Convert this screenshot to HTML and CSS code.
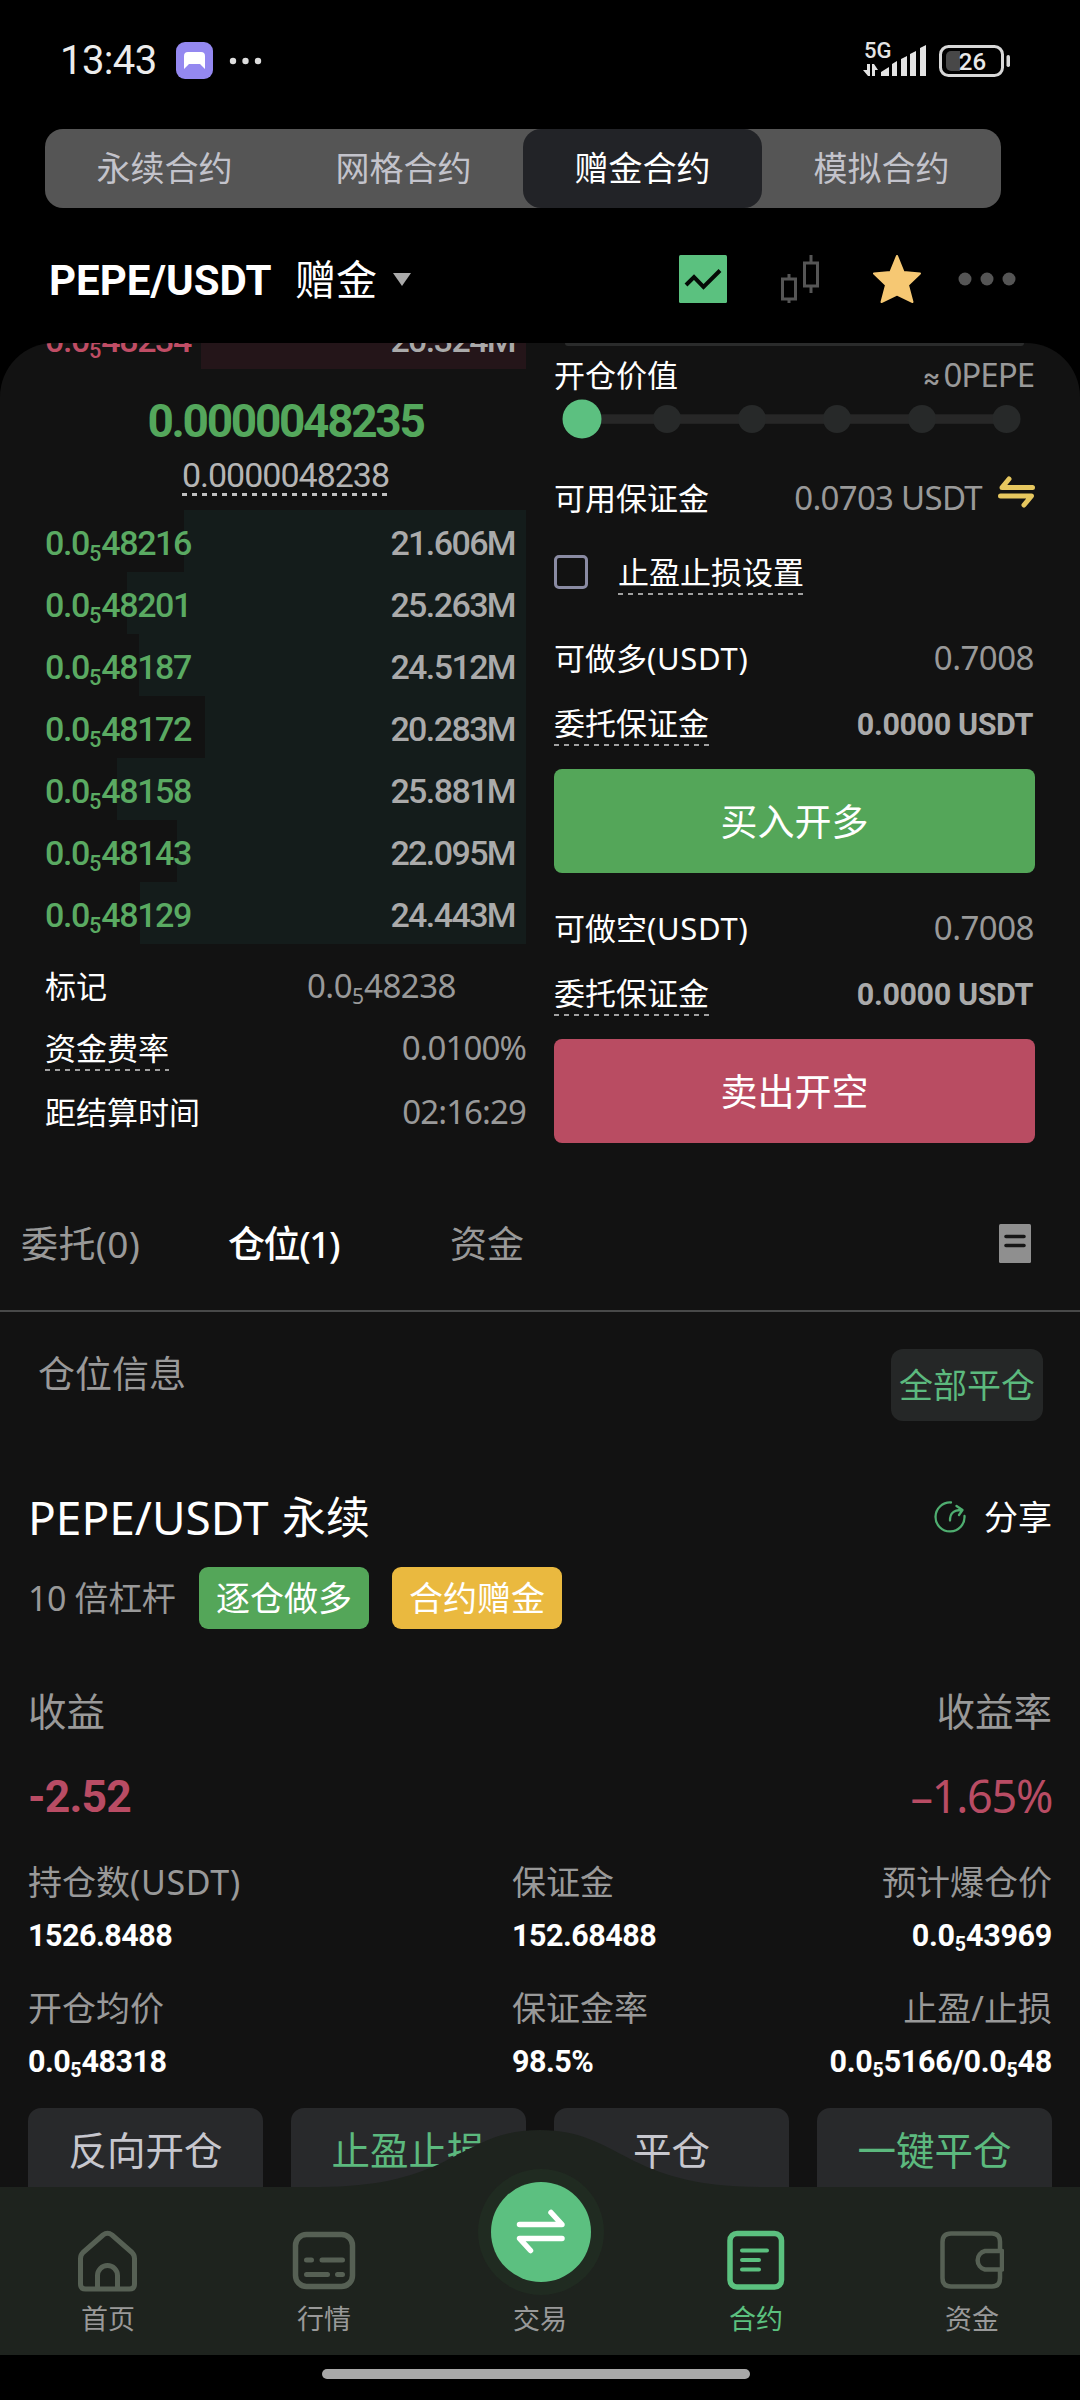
FILE: index.html
```html
<!DOCTYPE html>
<html lang="zh-CN">
<head>
<meta charset="utf-8">
<title>PEPE/USDT 赠金合约</title>
<link rel="stylesheet" href="styles.css">
</head>
<body>
<div class="screen">
  <header class="status">
    <span class="clock">13:43</span>
    <svg class="app-badge" viewBox="0 0 37 37"><rect width="37" height="37" rx="9" fill="#9488f0"/><path d="M8 14a4 4 0 0 1 4-4h13a4 4 0 0 1 4 4v13l-5-5H13l-5 5z" fill="#fff"/></svg>
    <svg class="more-dots" viewBox="0 0 33 8" fill="#ddd"><circle cx="4" cy="4" r="3.200"/><circle cx="16.500" cy="4" r="3.200"/><circle cx="29" cy="4" r="3.200"/></svg>
    <span class="grow"></span>
    <svg class="signal" viewBox="0 0 66 48" fill="#e4e4e4"><text x="3" y="21" class="net">5G</text><path d="M6 27h3v12H7l-5-6h4zM11 39V27h2l4 6h-3v6zM20 35l8-5v9h-8zM31 27l5-3v15h-5zM40 22l6-3v20h-6zM49 17l6-3v25h-6zM59 11l6-3v31h-6z"/></svg>
    <svg class="battery" viewBox="0 0 72 32"><rect x="1.500" y="1.500" width="62" height="29" rx="8" fill="none" stroke="#d8d8d8" stroke-width="3"/><path d="M12 6h9v20h-9a5 5 0 0 1-5-5v-10a5 5 0 0 1 5-5z" fill="#484848"/><rect x="67.500" y="10" width="3.500" height="12" rx="1.700" fill="#d8d8d8"/><text x="33.500" y="25" text-anchor="middle" class="level">26</text></svg>
  </header>

  <nav class="segments">
    <span class="segment">永续合约</span><span class="segment">网格合约</span><span class="segment segment-on">赠金合约</span><span class="segment">模拟合约</span>
  </nav>

  <div class="pair-bar">
    <strong class="pair">PEPE/USDT</strong><span class="pair-kind">赠金</span><i class="caret"></i>
    <span class="grow"></span>
    <svg class="ico-chart" viewBox="0 0 48 48"><rect width="48" height="48" rx="1.500" fill="#5bc17f"/><path d="M7 30l8-8 9.500 10L41 15.500" fill="none" stroke="#050a06" stroke-width="4"/></svg>
    <svg class="ico-candle" viewBox="0 0 38 48" fill="none" stroke="#555" stroke-width="3"><path d="M1.500 24h13v20h-13zM8 19v5M8 44v4M23.500 8h13v23h-13zM30 0v8M30 31v7"/></svg>
    <svg class="ico-star" viewBox="0 0 48 48" fill="#f6c873" stroke="#f6c873" stroke-width="2" stroke-linejoin="round"><path d="M24 1l6.500 16 16.500 1.500-12 11.500L39.500 47 24 39.500 8.500 47 13 30 1 18.500 17.500 17z"/></svg>
    <svg class="ico-more" viewBox="0 0 58 14" fill="#555"><circle cx="7" cy="7" r="6.500"/><circle cx="29" cy="7" r="6.500"/><circle cx="51" cy="7" r="6.500"/></svg>
  </div>

  <main class="panel">
    <div class="trade">
      <section class="book">
        <div class="ask"><div class="ask-fill"></div><span class="px">0.0<sub>5</sub>48234</span><span class="qty">20.324M</span></div>
        <div class="last">0.0000048235</div>
        <div class="index-line"><span class="index">0.0000048238</span></div>
        <div class="bids">
          <div class="bid"><div class="fill" style="width:342px"></div><span class="px">0.0<sub>5</sub>48216</span><span class="qty">21.606M</span></div>
          <div class="bid"><div class="fill" style="width:399px"></div><span class="px">0.0<sub>5</sub>48201</span><span class="qty">25.263M</span></div>
          <div class="bid"><div class="fill" style="width:387px"></div><span class="px">0.0<sub>5</sub>48187</span><span class="qty">24.512M</span></div>
          <div class="bid"><div class="fill" style="width:321px"></div><span class="px">0.0<sub>5</sub>48172</span><span class="qty">20.283M</span></div>
          <div class="bid"><div class="fill" style="width:409px"></div><span class="px">0.0<sub>5</sub>48158</span><span class="qty">25.881M</span></div>
          <div class="bid"><div class="fill" style="width:349px"></div><span class="px">0.0<sub>5</sub>48143</span><span class="qty">22.095M</span></div>
          <div class="bid"><div class="fill" style="width:386px"></div><span class="px">0.0<sub>5</sub>48129</span><span class="qty">24.443M</span></div>
        </div>
        <div class="info info-mark"><span>标记</span><span class="dim">0.0<sub>5</sub>48238</span></div>
        <div class="info"><span class="hint">资金费率</span><span class="dim tight">0.0100%</span></div>
        <div class="info info-time"><span>距结算时间</span><span class="dim tight">02:16:29</span></div>
      </section>

      <section class="order">
        <div class="input-edge"></div>
        <div class="line value-line"><span>开仓价值</span><span class="dim worth"><span class="approx">≈</span>0PEPE</span></div>
        <svg class="slider" viewBox="0 0 481 40"><rect x="28" y="15.300" width="424" height="9.500" fill="#272727"/><g fill="#272929"><circle cx="113" cy="20" r="14"/><circle cx="198" cy="20" r="14"/><circle cx="283" cy="20" r="14"/><circle cx="368" cy="20" r="14"/><circle cx="452.500" cy="20" r="14"/></g><circle cx="28" cy="20" r="19.500" fill="#5cc080"/></svg>
        <div class="line avail"><span>可用保证金</span><span class="dim money">0.0703 USDT</span><svg class="swap" viewBox="0 0 37 32" fill="none" stroke="#e6c75f" stroke-width="5" stroke-linecap="round" stroke-linejoin="round"><path d="M34.500 11.500H4L11 3M2.500 20H33.500L26 29"/></svg></div>
        <div class="line tpsl"><i class="check"></i><span class="hint">止盈止损设置</span></div>
        <div class="line can"><span>可做多<span class="unit">(USDT)</span></span><span class="dim">0.7008</span></div>
        <div class="line cost"><span class="hint">委托保证金</span><strong>0.0000 USDT</strong></div>
        <button class="act act-buy">买入开多</button>
        <div class="line can can-short"><span>可做空<span class="unit">(USDT)</span></span><span class="dim">0.7008</span></div>
        <div class="line cost"><span class="hint">委托保证金</span><strong>0.0000 USDT</strong></div>
        <button class="act act-sell">卖出开空</button>
      </section>
    </div>

    <div class="tabs">
      <span class="tab tab-orders">委托(0)</span><span class="tab tab-on">仓位(1)</span><span class="tab">资金</span>
      <svg class="ico-doc" viewBox="0 0 32 39"><rect width="32" height="39" rx="1.500" fill="#8f8f8f"/><path d="M7 12.500h18M7 21.500h18" stroke="#161616" stroke-width="3.600" stroke-linecap="round"/></svg>
    </div>

    <div class="section-head"><span>仓位信息</span><button class="close-all">全部平仓</button></div>

    <section class="position">
      <div class="pos-title"><span class="pos-pair">PEPE/USDT</span><span class="pos-kind">永续</span><svg class="ico-share" viewBox="0 0 32 32" fill="none" stroke="#4fae70" stroke-width="2.300" stroke-linecap="round" stroke-linejoin="round"><path d="M17 1.500A14.500 14.500 0 1 0 30.500 15M16 19.500c0-7 3-10.500 11.500-10.500M22.500 5l6 4-3.500 5"/></svg><span class="share">分享</span></div>
      <div class="tags"><span class="lever">10 倍杠杆</span><span class="tag tag-long">逐仓做多</span><span class="tag tag-bonus">合约赠金</span></div>
      <div class="pnl-labels"><span>收益</span><span>收益率</span></div>
      <div class="pnl"><strong>-2.52</strong><span class="rate">–1.65%</span></div>
      <div class="stats">
        <div class="stat"><span class="label">持仓数<span class="unit">(USDT)</span></span><strong>1526.8488</strong></div>
        <div class="stat"><span class="label">保证金</span><strong>152.68488</strong></div>
        <div class="stat stat-end"><span class="label">预计爆仓价</span><strong>0.0<sub>5</sub>43969</strong></div>
        <div class="stat"><span class="label">开仓均价</span><strong>0.0<sub>5</sub>48318</strong></div>
        <div class="stat"><span class="label">保证金率</span><strong>98.5%</strong></div>
        <div class="stat stat-end"><span class="label">止盈/止损</span><strong>0.0<sub>5</sub>5166/0.0<sub>5</sub>48</strong></div>
      </div>
      <div class="pos-actions"><button>反向开仓</button><button class="go">止盈止损</button><button>平仓</button><button class="go">一键平仓</button></div>
    </section>
  </main>

  <footer class="dock">
    <svg class="dock-shape" viewBox="0 0 1080 225"><path d="M0 57H320C455 57 460 0 540 0S625 57 760 57H1080V225H0z" fill="#1e231e"/><circle cx="541" cy="102" r="63" fill="#202b21"/><circle cx="541" cy="102" r="50" fill="#5cc080"/><path d="M519.500 94.500H562L551 82.500M562 108.500H519.500L530.500 120.500" fill="none" stroke="#fff" stroke-width="5.500" stroke-linecap="round" stroke-linejoin="round"/></svg>
    <div class="dock-items">
      <div class="item"><svg viewBox="0 0 64 64" fill="none" stroke="#566054" stroke-width="5" stroke-linejoin="round"><path d="M4.500 28.500Q4.500 25 7 22.500L27 5Q31.500 1.500 36 5L56 22.500Q58.500 25 58.500 28.500V54Q58.500 59 53.500 59H9.500Q4.500 59 4.500 54zM21.500 59V45.500a10 10 0 0 1 20 0V59"/></svg><span>首页</span></div>
      <div class="item"><svg viewBox="0 0 64 64" fill="none" stroke="#566054" stroke-width="5.500" stroke-linecap="round"><rect x="3.500" y="4.500" width="57" height="52" rx="11"/><path d="M14.500 30H19.500M30 30H50.500M14.500 44.500H35.500M45.500 44.500H50.500" stroke-width="5"/></svg><span>行情</span></div>
      <div class="item"><i class="spacer"></i><span>交易</span></div>
      <div class="item item-on"><svg viewBox="0 0 64 64" fill="none" stroke="#5bc17f" stroke-width="5.500" stroke-linecap="round"><rect x="6" y="3.500" width="51.500" height="53.500" rx="7"/><path d="M18 20.500H43M18 30H35M18 39.500H35" stroke-width="4"/></svg><span>合约</span></div>
      <div class="item"><svg viewBox="0 0 64 64" fill="none" stroke="#566054" stroke-width="4.500" stroke-linejoin="round"><path d="M60 21V12Q60 3.500 52 3.500H11Q2.500 3.500 2.500 12V48Q2.500 56.500 11 56.500H52Q60 56.500 60 48V39"/><path d="M62 21H45a9.500 9.500 0 0 0 0 18.500H62z"/></svg><span>资金</span></div>
    </div>
    <div class="home-bar"></div>
  </footer>
</div>
</body>
</html>
```

FILE: styles.css
```css
* { box-sizing: border-box; }
body { margin: 0; background: #000; }
button { border: 0; padding: 0; font: inherit; }
svg { display: block; flex: none; }
.screen {
  position: relative;
  width: 1080px;
  height: 2400px;
  overflow: hidden;
  background: #000;
  color: #fff;
  font: 400 33px/40px "Noto Sans", "Noto Sans CJK SC", sans-serif;
  white-space: nowrap;
}
.grow { flex: 1; }

.status { display: flex; align-items: center; height: 129px; padding: 0 69px 8px 60px; }
.clock { width: 116px; font: 400 40px/40px Roboto, sans-serif; letter-spacing: -.6px; color: #ececec; }
.app-badge { width: 37px; height: 37px; margin-right: 16px; }
.more-dots { width: 33px; height: 8px; }
.signal { width: 66px; height: 48px; margin-right: 12px; }
.net { font: 500 22px Roboto, sans-serif; }
.battery { width: 72px; height: 32px; }
.level { font: 500 24px Roboto, sans-serif; fill: #e8e8e8; }

.segments { display: flex; width: 956px; height: 79px; margin-left: 45px; border-radius: 18px; background: #555; }
.segment { width: 239px; font-size: 34px; line-height: 79px; text-align: center; color: #c3c3cb; border-radius: 18px; }
.segment-on { background: #222327; color: #fff; }

.pair-bar { display: flex; align-items: center; height: 135px; padding: 7px 64px 0 49px; }
.pair { width: 246px; padding-top: 3px; font: 700 42px/48px Roboto, sans-serif; }
.pair-kind { width: 98px; font-size: 41px; line-height: 48px; }
.caret { border: 9px solid transparent; border-top: 13px solid #aaa; border-bottom: 0; }
.ico-chart { width: 48px; height: 48px; margin-right: 54px; }
.ico-candle { width: 38px; height: 48px; margin-right: 54px; }
.ico-star { width: 48px; height: 48px; margin-right: 37px; }
.ico-more { width: 58px; height: 14px; }

.panel { height: 2012px; overflow: hidden; background: #121212; border-radius: 54px 54px 0 0; }
.trade { display: flex; gap: 28px; padding-left: 45px; height: 843px; }
sub { font-size: .64em; line-height: 0; vertical-align: -.27em; letter-spacing: 0; }

.book { width: 481px; }
.ask, .bid { position: relative; display: flex; justify-content: space-between; padding-right: 11px; height: 62px; font: 500 34px/62px Roboto, sans-serif; letter-spacing: -1.4px; }
.ask { height: 26px; overflow: hidden; align-items: flex-end; color: #c04d65; }
.ask .px, .ask .qty { line-height: 62px; position: relative; top: 2px; }
.ask-fill { position: absolute; right: 0; top: 0; width: 325px; height: 26px; background: #241519; }
.fill { position: absolute; right: 0; top: 0; bottom: 0; background: #141c1b; }
.bid .px, .bid .qty { position: relative; top: 2px; }
.qty, .ask .qty { color: #aaa; letter-spacing: -1.6px; }
.bid { color: #5aaa62; }
.bids { height: 434px; }
.last { margin-top: 29px; height: 46px; font: 700 46px/46px Roboto, sans-serif; letter-spacing: -2.3px; text-align: center; color: #54a75c; }
.index-line { height: 66px; padding-top: 11px; text-align: center; }
.index { display: inline-block; height: 37px; font: 400 34px/33px Roboto, sans-serif; letter-spacing: -1px; color: #b4b4b4; background: repeating-linear-gradient(90deg, #c0c0c0 0 5px, transparent 5px 10px) 0 100% / 100% 3px no-repeat; }
.info { display: flex; justify-content: space-between; height: 62px; font-size: 31px; line-height: 62px; }
.info-mark { margin-top: 11px; padding-right: 70px; }
.info-time { height: 66px; line-height: 66px; }
.dim { color: #999; font-size: 33px; letter-spacing: -.5px; }
.info .tight { letter-spacing: -.9px; }
.hint { background: repeating-linear-gradient(90deg, #a0a0a0 0 5px, transparent 5px 10px) 0 100% / 100% 2px no-repeat; }
.info .hint { height: 54px; }

.order { width: 481px; }
.input-edge { height: 3px; margin: 0 11px; background: #2a2b2b; border-radius: 0 0 8px 8px; }
.line { display: flex; justify-content: space-between; font-size: 31px; line-height: 44px; height: 44px; }
.value-line { margin-top: 7px; padding-right: 1px; }
.worth { letter-spacing: -1px; }
.approx { font: 500 27px Inter, sans-serif; letter-spacing: 3px; }
.unit { letter-spacing: .7px; }
.slider { width: 481px; height: 40px; margin-top: 2px; }
.avail { margin-top: 37px; }
.money { margin-left: auto; margin-right: 16px; letter-spacing: -.7px; }
.swap { width: 37px; height: 32px; }
.tpsl { margin-top: 30px; justify-content: flex-start; align-items: center; gap: 30px; }
.check { width: 34px; height: 34px; border: 3px solid #8a8ba3; border-radius: 5px; }
.tpsl .hint { height: 45px; }
.can { margin-top: 42px; padding-right: 1px; }
.cost { margin-top: 21px; padding-right: 2px; }
.cost .hint { height: 45px; }
.cost strong { font: 700 30.500px/48px Roboto, sans-serif; letter-spacing: -.4px; color: #aaa; }
.act { display: block; width: 481px; height: 104px; margin-top: 24px; border-radius: 8px; color: #fff; font-size: 37px; line-height: 103px; }
.act-buy { background: #54a659; }
.act-sell { background: #b94c62; }
.can-short { margin-top: 33px; }

.tabs { display: flex; height: 126px; padding: 38px 49px 0 21px; border-bottom: 2px solid #484949; font-size: 37px; color: #999; }
.tab { width: 222px; }
.tab-orders { width: 207px; letter-spacing: .4px; }
.tab-on { color: #fff; font-weight: 500; letter-spacing: -1.4px; }
.ico-doc { width: 32px; height: 39px; margin-left: auto; }

.section-head { display: flex; justify-content: space-between; align-items: flex-start; height: 168px; padding: 37px 37px 0 38px; font-size: 37px; line-height: 50px; color: #999; }
.close-all { width: 152px; height: 72px; border-radius: 12px; background: #252727; color: #5cb97e; font-size: 34px; line-height: 72px; }

.position { padding: 0 28px; }
.pos-title { display: flex; align-items: center; height: 73px; }
.pos-pair { width: 254px; font-size: 46px; letter-spacing: 0; }
.pos-kind { font-size: 44px; }
.ico-share { width: 32px; height: 32px; margin-left: auto; margin-right: 18px; }
.share { font-size: 34px; }
.tags { display: flex; height: 62px; margin-top: 14px; font-size: 34px; line-height: 62px; }
.lever { width: 171px; color: #999; letter-spacing: -.4px; }
.tag { width: 170px; margin-right: 23px; border-radius: 9px; text-align: center; }
.tag-long { background: #54a659; }
.tag-bonus { background: #eab93f; }
.pnl-labels { display: flex; justify-content: space-between; margin-top: 57px; font-size: 38.500px; line-height: 50px; color: #999; }
.pnl { display: flex; justify-content: space-between; margin-top: 35px; line-height: 50px; color: #b94c64; }
.pnl strong { font: 700 44.500px/52px Roboto, sans-serif; letter-spacing: -.8px; }
.rate { font-size: 45px; letter-spacing: -1.3px; }
.stats { display: grid; grid-template-columns: 484px 270px 1fr; grid-auto-rows: 126px; margin-top: 34px; height: 251px; }
.stat { display: flex; flex-direction: column; }
.stat-end { align-items: flex-end; }
.label { height: 50px; font-size: 34px; line-height: 50px; color: #999; }
.stat strong { height: 54px; font: 700 30.500px/57px Roboto, sans-serif; letter-spacing: -.5px; }
.stat-end strong { letter-spacing: -.3px; }
.pos-actions { display: flex; gap: 28px; }
.pos-actions button { width: 235px; height: 120px; border-radius: 13px; background: #28292b; color: #c7c7ce; font-size: 38.500px; line-height: 85px; padding-bottom: 35px; }
.pos-actions .go { color: #5cb97e; }

.dock { position: absolute; left: 0; bottom: 0; width: 1080px; height: 270px; }
.dock-shape { position: absolute; left: 0; top: 0; width: 1080px; height: 225px; }
.dock-items { position: relative; display: flex; height: 225px; padding-top: 100px; }
.item { width: 216px; display: flex; flex-direction: column; align-items: center; font-size: 27px; line-height: 36px; color: #999; }
.item svg, .spacer { width: 64px; height: 64px; margin-bottom: 7px; }
.item-on { color: #5bc17f; }
.home-bar { position: relative; width: 428px; height: 10px; margin: 14px 0 0 322px; border-radius: 5px; background: #a8a8a8; }
```
